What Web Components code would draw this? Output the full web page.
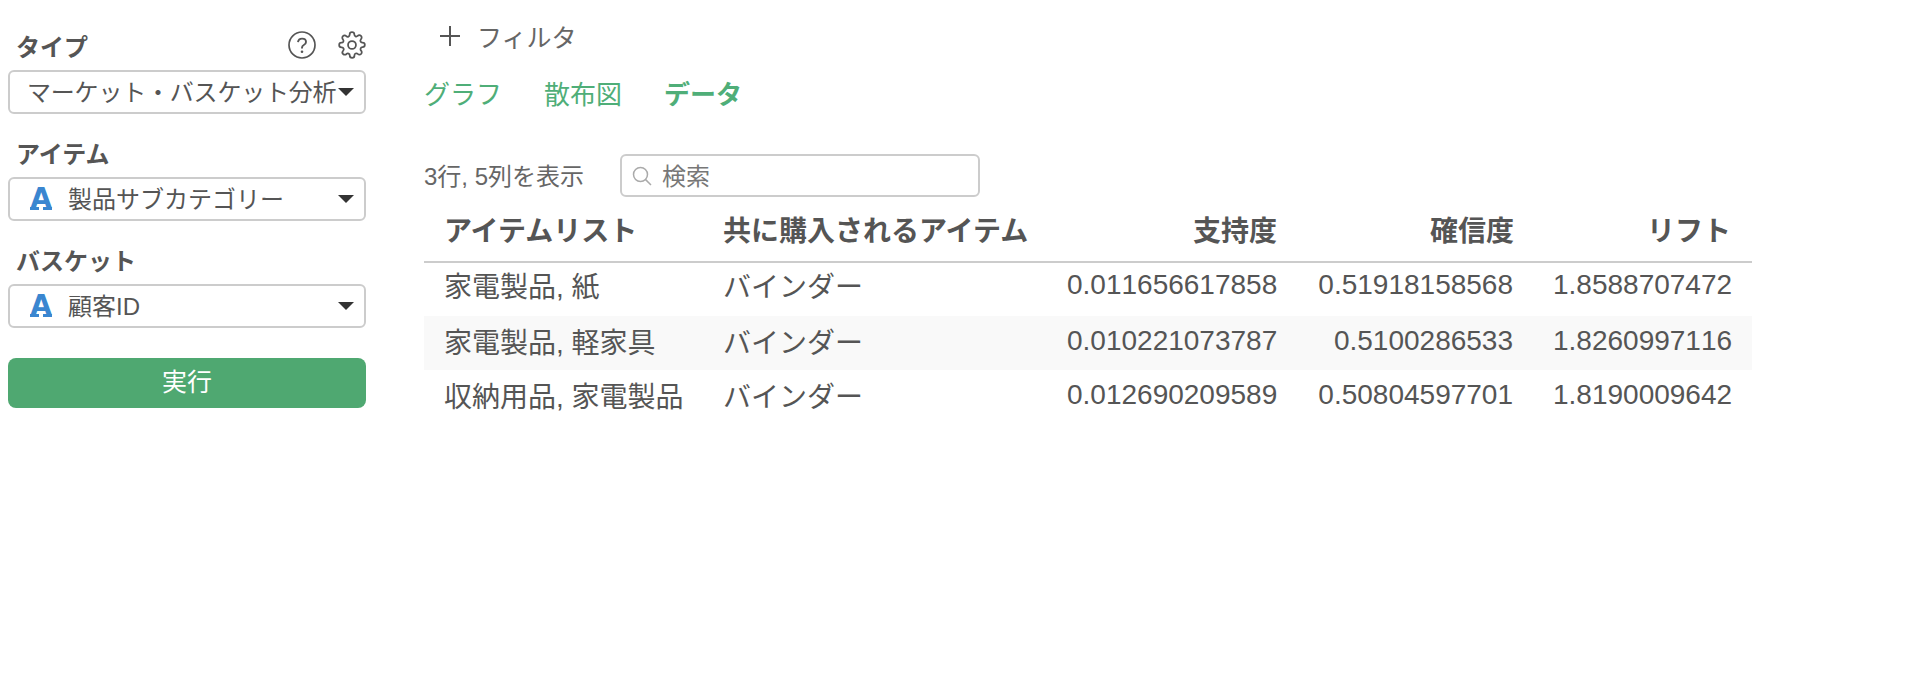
<!DOCTYPE html>
<html lang="ja">
<head>
<meta charset="utf-8">
<title>マーケット・バスケット分析</title>
<style>
    html, body {
        margin: 0;
        background: white;
        color: #555;
        font-family: "Liberation Sans", "Noto Sans CJK JP", sans-serif;
    }
</style>
</head>
<body>
<app-layout>
    <div slot="side">
        <field-label first>タイプ
            <svg slot="tools" width="28" height="28" viewBox="0 0 28 28" fill="none" stroke="#555" stroke-width="1.7">
                <circle cx="14" cy="14" r="13"/>
                <path d="M10 11.2c.3-2.3 2-3.6 4.1-3.6 2.2 0 3.9 1.4 3.9 3.3 0 1.5-.9 2.4-2.2 3.1-1.2.7-1.8 1.4-1.8 2.7v.7" stroke-width="1.9"/>
                <circle cx="14" cy="20.8" r="1.3" fill="#555" stroke="none"/>
            </svg>
            <svg slot="tools" width="28" height="28" viewBox="0 0 24 24" fill="none" stroke="#555" stroke-width="1.5" stroke-linejoin="round">
                <circle cx="12" cy="12" r="3.4"/>
                <path d="M19.4 15a1.65 1.65 0 0 0 .33 1.82l.06.06a2 2 0 1 1-2.83 2.83l-.06-.06a1.65 1.65 0 0 0-2.8 1.17V21a2 2 0 1 1-4 0v-.09A1.65 1.65 0 0 0 7.3 19.7l-.06.06a2 2 0 1 1-2.83-2.83l.06-.06a1.65 1.65 0 0 0-1.17-2.8H3a2 2 0 1 1 0-4h.09A1.65 1.65 0 0 0 4.3 7.3l-.06-.06a2 2 0 1 1 2.83-2.83l.06.06a1.65 1.65 0 0 0 1.82.33H9a1.65 1.65 0 0 0 1-1.51V3a2 2 0 1 1 4 0v.09a1.65 1.65 0 0 0 2.8 1.17l.06-.06a2 2 0 1 1 2.83 2.83l-.06.06a1.65 1.65 0 0 0 1.17 2.8H21a2 2 0 1 1 0 4h-.09a1.65 1.65 0 0 0-1.51 1z"/>
            </svg>
        </field-label>
        <select-box plain>マーケット・バスケット分析</select-box>
        <field-label>アイテム</field-label>
        <select-box>製品サブカテゴリー</select-box>
        <field-label>バスケット</field-label>
        <select-box>顧客ID</select-box>
        <run-button>実行</run-button>
    </div>
    <filter-add>フィルタ</filter-add>
    <tab-bar>
        <span>グラフ</span>
        <span>散布図</span>
        <span active>データ</span>
    </tab-bar>
    <table-info>3行, 5列を表示</table-info>
    <data-table></data-table>
</app-layout>

<script>
class AppLayout extends HTMLElement {
    constructor() {
        super();
        this.root = this.attachShadow({ mode: "open" });
        this.root.innerHTML = `
            <style>
                :host {
                    display: flex;
                    align-items: flex-start;
                    height: 696px;
                    box-sizing: border-box;
                }
                .side {
                    width: 358px;
                    margin-left: 8px;
                    padding-top: 27px;
                    flex: none;
                }
                .main {
                    width: 1328px;
                    margin-left: 58px;
                    flex: none;
                }
            </style>
            <div class="side"><slot name="side"></slot></div>
            <div class="main"><slot></slot></div>
        `;
    }
}

class FieldLabel extends HTMLElement {
    constructor() {
        super();
        this.root = this.attachShadow({ mode: "open" });
        this.root.innerHTML = `
            <style>
                :host {
                    display: flex;
                    align-items: center;
                    height: 36px;
                    margin: 20px 0 7px;
                    padding-left: 8px;
                    font-size: 24px;
                    font-weight: 700;
                    color: #555;
                }
                :host([first]) {
                    margin-top: 0;
                }
                .tools {
                    margin-left: auto;
                    display: flex;
                    gap: 22px;
                }
                ::slotted(svg) {
                    display: block;
                }
            </style>
            <slot></slot>
            <div class="tools"><slot name="tools"></slot></div>
        `;
    }
}

class SelectBox extends HTMLElement {
    constructor() {
        super();
        this.root = this.attachShadow({ mode: "open" });
        this.root.innerHTML = `
            <style>
                :host {
                    display: flex;
                    align-items: center;
                    height: 44px;
                    box-sizing: border-box;
                    border: 2px solid #ccc;
                    border-radius: 6px;
                    padding-left: 17px;
                    padding-right: 10px;
                    font-size: 24px;
                    color: #555;
                    background: white;
                    white-space: nowrap;
                }
                :host([plain]) {
                    letter-spacing: -0.2px;
                }
                .text {
                    padding-bottom: 4px;
                }
                .type {
                    position: relative;
                    width: 24px;
                    margin-left: 2px;
                    margin-right: 15px;
                    font-family: "DejaVu Sans", sans-serif;
                    font-size: 28px;
                    font-weight: 700;
                    line-height: 1;
                    color: #3a86d0;
                    text-align: center;
                }
                /* slab feet of the type icon */
                .type::before, .type::after {
                    content: "";
                    position: absolute;
                    bottom: 3px;
                    width: 9px;
                    height: 3px;
                    background: #3a86d0;
                }
                .type::before { left: 1px; }
                .type::after { right: 1px; }
                :host([plain]) .type {
                    display: none;
                }
                .caret {
                    margin-left: auto;
                    width: 0;
                    height: 0;
                    border-left: 8px solid transparent;
                    border-right: 8px solid transparent;
                    border-top: 8px solid #333;
                }
            </style>
            <span class="type">A</span>
            <span class="text"><slot></slot></span>
            <span class="caret"></span>
        `;
    }
}

class RunButton extends HTMLElement {
    constructor() {
        super();
        this.root = this.attachShadow({ mode: "open" });
        this.root.innerHTML = `
            <style>
                :host {
                    display: flex;
                    align-items: center;
                    justify-content: center;
                    height: 50px;
                    margin-top: 30px;
                    padding-bottom: 7px;
                    box-sizing: border-box;
                    border-radius: 8px;
                    background: #4fa871;
                    color: white;
                    font-size: 25px;
                }
            </style>
            <slot></slot>
        `;
    }
}

class FilterAdd extends HTMLElement {
    constructor() {
        super();
        this.root = this.attachShadow({ mode: "open" });
        this.root.innerHTML = `
            <style>
                :host {
                    display: flex;
                    align-items: center;
                    gap: 15px;
                    height: 36px;
                    margin-top: 18px;
                    padding-left: 14px;
                    font-size: 25px;
                    color: #666;
                }
                svg { display: block; }
            </style>
            <svg width="24" height="24" viewBox="0 0 24 24" stroke="#555" stroke-width="2"><path d="M12 2v20M2 12h20"/></svg>
            <span><slot></slot></span>
        `;
    }
}

class TabBar extends HTMLElement {
    constructor() {
        super();
        this.root = this.attachShadow({ mode: "open" });
        this.root.innerHTML = `
            <style>
                :host {
                    display: flex;
                    gap: 42px;
                    margin-top: 18px;
                    height: 40px;
                    align-items: center;
                    font-size: 26px;
                    color: #4fae78;
                }
                ::slotted([active]) {
                    font-weight: 700;
                }
            </style>
            <slot></slot>
        `;
    }
}

class TableInfo extends HTMLElement {
    constructor() {
        super();
        this.root = this.attachShadow({ mode: "open" });
        this.root.innerHTML = `
            <style>
                :host {
                    display: flex;
                    align-items: center;
                    gap: 36px;
                    margin-top: 42px;
                    font-size: 24px;
                    color: #666;
                }
                .search {
                    display: flex;
                    align-items: center;
                    gap: 10px;
                    width: 360px;
                    height: 43px;
                    box-sizing: border-box;
                    border: 2px solid #ccc;
                    border-radius: 6px;
                    padding-left: 10px;
                    color: #777;
                }
                .lift { padding-bottom: 2px; }
                svg { display: block; }
            </style>
            <span class="lift"><slot></slot></span>
            <div class="search">
                <svg width="20" height="20" viewBox="0 0 20 20" fill="none" stroke="#aaa" stroke-width="1.5"><circle cx="8.5" cy="8.5" r="7"/><path d="M13.6 13.6L19 19"/></svg>
                <span class="lift">検索</span>
            </div>
        `;
    }
}

class DataTable extends HTMLElement {
    constructor() {
        super();
        this.root = this.attachShadow({ mode: "open" });
        this.root.innerHTML = `
            <style>
                :host {
                    display: block;
                    margin-top: 9px;
                    font-size: 28px;
                    color: #555;
                }
                table {
                    width: 1328px;
                    table-layout: fixed;
                    border-collapse: collapse;
                }
                th, td {
                    box-sizing: border-box;
                    padding: 0 20px 4px;
                    text-align: left;
                    white-space: nowrap;
                }
                th {
                    height: 56px;
                    padding-bottom: 10px;
                    font-weight: 700;
                    border-bottom: 2px solid #ccc;
                }
                th.num { padding-right: 18px; }
                th:nth-child(4) { padding-right: 19px; }
                th:last-child { padding-right: 21px; }
                td { height: 54px; }
                td.num { font-kerning: none; }
                tbody tr:first-child td { padding-bottom: 9px; }
                .num { text-align: right; }
                tbody tr:nth-child(even) { background: #f9f9f9; }
            </style>
            <table>
                <colgroup>
                    <col style="width:279px"><col style="width:344px"><col style="width:248px"><col style="width:238px"><col style="width:219px">
                </colgroup>
                <thead></thead>
                <tbody></tbody>
            </table>
        `;
        this.setData(
            ["アイテムリスト", "共に購入されるアイテム", "支持度", "確信度", "リフト"],
            [
                ["家電製品, 紙", "バインダー", "0.011656617858", "0.51918158568", "1.8588707472"],
                ["家電製品, 軽家具", "バインダー", "0.010221073787", "0.5100286533", "1.8260997116"],
                ["収納用品, 家電製品", "バインダー", "0.012690209589", "0.50804597701", "1.8190009642"],
            ]
        );
    }

    setData(headers, rows) {
        let cls = (i) => (i > 1 ? ' class="num"' : "");
        this.root.querySelector("thead").innerHTML =
            "<tr>" + headers.map((h, i) => `<th${cls(i)}>${h}</th>`).join("") + "</tr>";
        this.root.querySelector("tbody").innerHTML = rows
            .map((row) => "<tr>" + row.map((c, i) => `<td${cls(i)}>${c}</td>`).join("") + "</tr>")
            .join("");
    }
}

customElements.define("app-layout", AppLayout);
customElements.define("field-label", FieldLabel);
customElements.define("select-box", SelectBox);
customElements.define("run-button", RunButton);
customElements.define("filter-add", FilterAdd);
customElements.define("tab-bar", TabBar);
customElements.define("table-info", TableInfo);
customElements.define("data-table", DataTable);
</script>
</body>
</html>
